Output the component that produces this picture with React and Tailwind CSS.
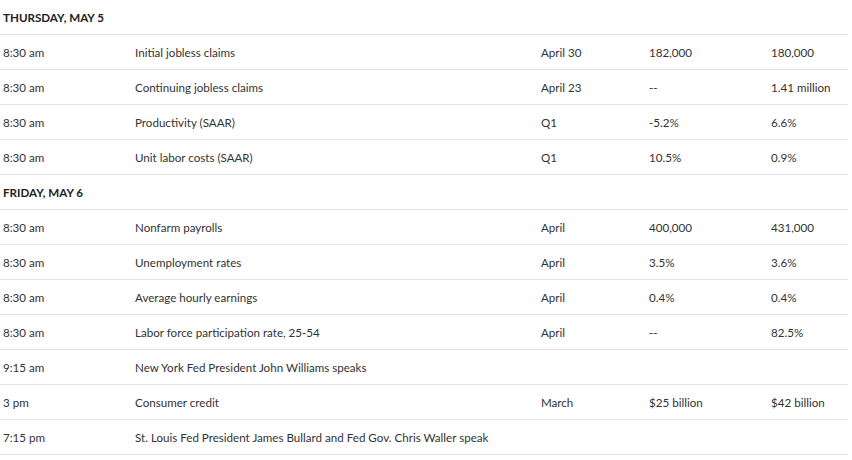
import React from 'react';

const days = [
  {
    title: 'THURSDAY, MAY 5',
    rows: [
      ['8:30 am', 'Initial jobless claims', 'April 30', '182,000', '180,000'],
      ['8:30 am', 'Continuing jobless claims', 'April 23', '--', '1.41 million'],
      ['8:30 am', 'Productivity (SAAR)', 'Q1', '-5.2%', '6.6%'],
      ['8:30 am', 'Unit labor costs (SAAR)', 'Q1', '10.5%', '0.9%'],
    ],
  },
  {
    title: 'FRIDAY, MAY 6',
    rows: [
      ['8:30 am', 'Nonfarm payrolls', 'April', '400,000', '431,000'],
      ['8:30 am', 'Unemployment rates', 'April', '3.5%', '3.6%'],
      ['8:30 am', 'Average hourly earnings', 'April', '0.4%', '0.4%'],
      ['8:30 am', 'Labor force participation rate, 25-54', 'April', '--', '82.5%'],
      ['9:15 am', 'New York Fed President John Williams speaks', '', '', ''],
      ['3 pm', 'Consumer credit', 'March', '$25 billion', '$42 billion'],
      ['7:15 pm', 'St. Louis Fed President James Bullard and Fed Gov. Chris Waller speak', '', '', ''],
    ],
  },
];

const Row = ({ cells }) => (
  <div className="flex h-[35px] items-center border-b border-[#e2e2e2] pt-[2px] text-[11.6px] text-[#333]">
    <div className="w-[135px] shrink-0 pl-[3px]">{cells[0]}</div>
    <div className="w-[406px] shrink-0 whitespace-nowrap">{cells[1]}</div>
    <div className="w-[108px] shrink-0">{cells[2]}</div>
    <div className="w-[122px] shrink-0">{cells[3]}</div>
    <div className="flex-1">{cells[4]}</div>
  </div>
);

const App = () => {
  return (
    <main className="h-[460px] w-[852px] bg-white font-['Lato',sans-serif]">
      <div className="w-[848px]">
        {days.map((day) => (
          <div key={day.title}>
            <div className="flex h-[35px] items-center border-b border-[#e2e2e2] pt-[1px] pl-[3px] text-[11.6px] font-bold text-[#222]">
              {day.title}
            </div>
            {day.rows.map((r, i) => (
              <Row key={i} cells={r} />
            ))}
          </div>
        ))}
      </div>
    </main>
  );
};

export default App;
